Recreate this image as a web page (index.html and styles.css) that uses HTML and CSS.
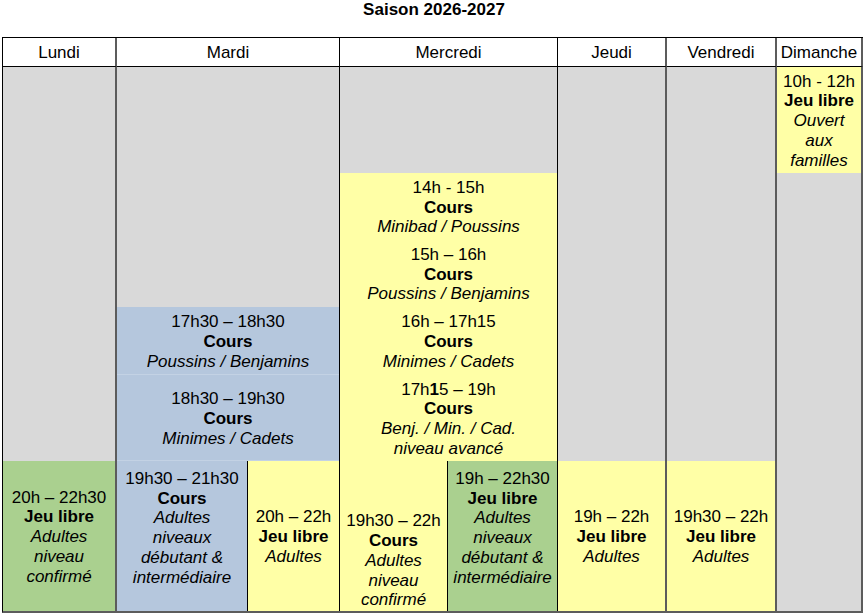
FILE: index.html
```html
<!DOCTYPE html>
<html lang="fr">
<head>
<meta charset="utf-8">
<title>Saison 2026-2027</title>
<link rel="stylesheet" href="styles.css">
</head>
<body>
<div class="title">Saison 2026-2027</div>
<div class="wrap">
  <div class="planning">
    <div class="cell head c-lun">Lundi</div>
    <div class="cell head c-mar">Mardi</div>
    <div class="cell head c-mer">Mercredi</div>
    <div class="cell head c-jeu">Jeudi</div>
    <div class="cell head c-ven">Vendredi</div>
    <div class="cell head c-dim">Dimanche</div>

    <!-- Lundi -->
    <div class="cell gray c-lun r-2-7"></div>
    <div class="cell green c-lun r-7">
      <div>20h – 22h30</div><div class="b">Jeu libre</div><div class="i">Adultes</div><div class="i">niveau</div><div class="i">confirmé</div>
    </div>

    <!-- Mardi -->
    <div class="cell gray c-mar r-2-5"></div>
    <div class="cell blue c-mar r-5 line-bot">
      <div>17h30 – 18h30</div><div class="b">Cours</div><div class="i">Poussins / Benjamins</div>
    </div>
    <div class="cell blue c-mar r-6 line-bot">
      <div>18h30 – 19h30</div><div class="b">Cours</div><div class="i">Minimes / Cadets</div>
    </div>
    <div class="cell blue c-mar-a r-7 top split">
      <div>19h30 – 21h30</div><div class="b">Cours</div><div class="i">Adultes</div><div class="i">niveaux</div><div class="i">débutant &amp;</div><div class="i">intermédiaire</div>
    </div>
    <div class="cell yellow c-mar-b r-7">
      <div>20h – 22h</div><div class="b">Jeu libre</div><div class="i">Adultes</div>
    </div>

    <!-- Mercredi -->
    <div class="cell gray c-mer r-2"></div>
    <div class="cell yellow c-mer r-3">
      <div>14h - 15h</div><div class="b">Cours</div><div class="i">Minibad / Poussins</div>
    </div>
    <div class="cell yellow c-mer r-4">
      <div>15h – 16h</div><div class="b">Cours</div><div class="i">Poussins / Benjamins</div>
    </div>
    <div class="cell yellow c-mer r-5">
      <div>16h – 17h15</div><div class="b">Cours</div><div class="i">Minimes / Cadets</div>
    </div>
    <div class="cell yellow c-mer r-6">
      <div>17h<b>1</b>5 – 19h</div><div class="b">Cours</div><div class="i">Benj. / Min. / Cad.</div><div class="i">niveau avancé</div>
    </div>
    <div class="cell yellow c-mer-a r-7 bottom split">
      <div>19h30 – 22h</div><div class="b">Cours</div><div class="i">Adultes</div><div class="i">niveau</div><div class="i">confirmé</div>
    </div>
    <div class="cell green c-mer-b r-7 top">
      <div>19h – 22h30</div><div class="b">Jeu libre</div><div class="i">Adultes</div><div class="i">niveaux</div><div class="i">débutant &amp;</div><div class="i">intermédiaire</div>
    </div>

    <!-- Jeudi -->
    <div class="cell gray c-jeu r-2-7"></div>
    <div class="cell yellow c-jeu r-7">
      <div>19h – 22h</div><div class="b">Jeu libre</div><div class="i">Adultes</div>
    </div>

    <!-- Vendredi -->
    <div class="cell gray c-ven r-2-7"></div>
    <div class="cell yellow c-ven r-7">
      <div>19h30 – 22h</div><div class="b">Jeu libre</div><div class="i">Adultes</div>
    </div>

    <!-- Dimanche -->
    <div class="cell yellow c-dim r-2">
      <div>10h - 12h</div><div class="b">Jeu libre</div><div class="i">Ouvert</div><div class="i">aux</div><div class="i">familles</div>
    </div>
    <div class="cell gray c-dim r-3-8"></div>
  </div>
</div>
</body>
</html>
```

FILE: styles.css
```css
* { box-sizing: border-box; }

html, body {
  margin: 0;
  padding: 0;
  background: #ffffff;
}

body {
  font-family: "Liberation Sans", Arial, sans-serif;
  font-size: 17px;
  line-height: 19.7px;
  color: #000;
}

.title {
  height: 37px;
  text-align: center;
  font-weight: bold;
  font-size: 17px;
  line-height: 20px;
  padding-left: 2px;
}

.wrap {
  padding-left: 2px;
}

.planning {
  display: grid;
  width: 861px;
  grid-template-columns: 114px 131px 92px 108px 110px 109px 110px 86px;
  grid-template-rows: 29px 106px 67px 67px 68px 86px 150px;
  border-top: 1px solid #000;
  border-left: 1px solid #000;
  border-bottom: 2px solid #5c5c5c;
}

.cell {
  display: flex;
  flex-direction: column;
  justify-content: center;
  align-items: center;
  text-align: center;
  border-right: 1px solid #000;
  white-space: nowrap;
  padding-top: 2px;
}

.cell.head {
  background: #ffffff;
  border-bottom: 1px solid #000;
}

.b { font-weight: bold; }
.i { font-style: italic; }

.gray { background: #d9d9d9; }
.yellow { background: #ffffa6; }
.blue { background: #b5c7dd; }
.green { background: #aad08f; }

.top { justify-content: flex-start; padding-top: 8px; }
.bottom { justify-content: flex-end; padding-bottom: 1px; }

.line-bot { box-shadow: inset 0 -1px 0 #c3d2e4; }

/* columns */
.c-lun { grid-column: 1 / 2; border-right: 2px solid #5c5c5c; }
.c-mar { grid-column: 2 / 4; }
.c-mar-a { grid-column: 2 / 3; }
.c-mar-b { grid-column: 3 / 4; }
.c-mer { grid-column: 4 / 6; }
.c-mer-a { grid-column: 4 / 5; }
.c-mer-b { grid-column: 5 / 6; }
.c-jeu { grid-column: 6 / 7; border-right: 2px solid #5c5c5c; }
.c-ven { grid-column: 7 / 8; border-right: 2px solid #5c5c5c; }
.c-dim { grid-column: 8 / 9; border-right: 2px solid #5c5c5c; }

/* rows */
.head { grid-row: 1 / 2; }
.r-2 { grid-row: 2 / 3; }
.r-3 { grid-row: 3 / 4; }
.r-4 { grid-row: 4 / 5; }
.r-5 { grid-row: 5 / 6; }
.r-6 { grid-row: 6 / 7; }
.r-7 { grid-row: 7 / 8; }
.r-2-5 { grid-row: 2 / 5; }
.r-2-7 { grid-row: 2 / 7; }
.r-3-8 { grid-row: 3 / 8; }
```
